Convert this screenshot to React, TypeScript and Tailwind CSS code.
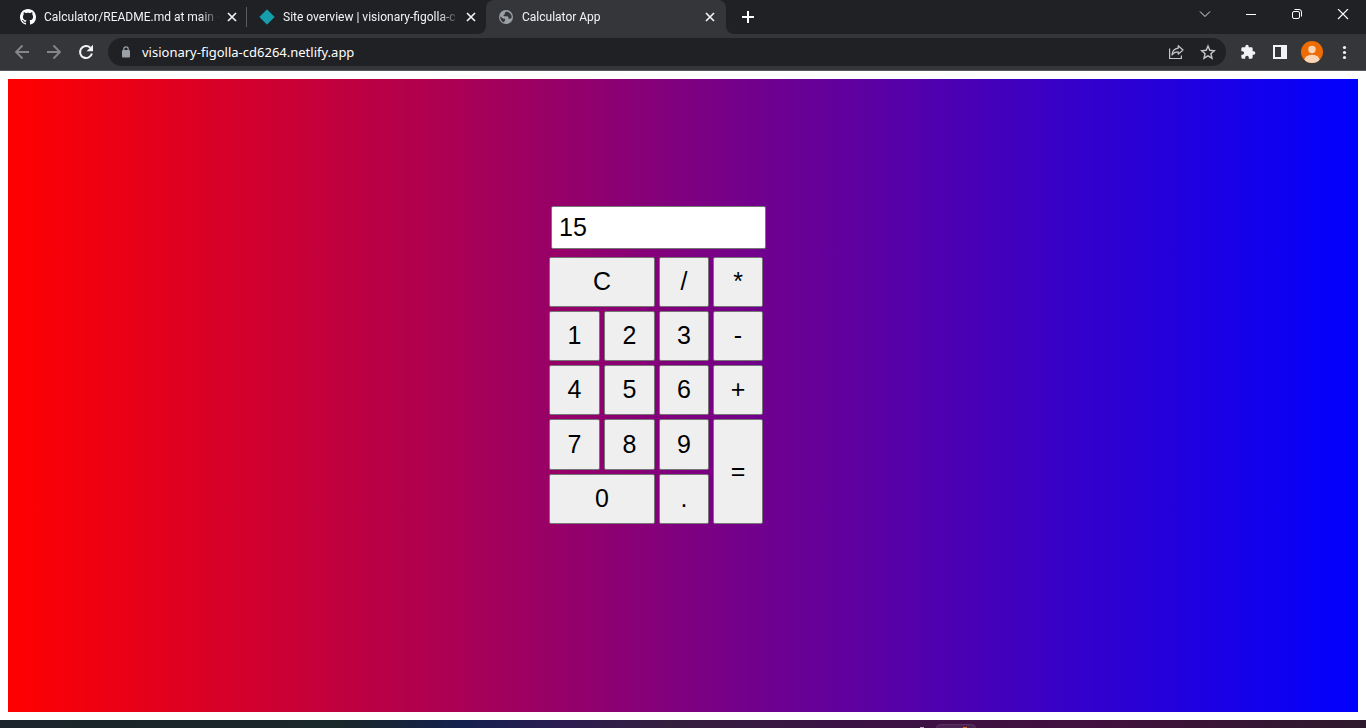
import { useState } from "react";
import type { ReactNode } from "react";

function GithubIcon() {
  return (
    <svg className="size-4 shrink-0" viewBox="0 0 16 16" fill="#fff" aria-hidden="true">
      <path d="M8 0C3.58 0 0 3.58 0 8c0 3.54 2.29 6.53 5.47 7.59.4.07.55-.17.55-.38 0-.19-.01-.82-.01-1.49-2.01.37-2.53-.49-2.69-.94-.09-.23-.48-.94-.82-1.13-.28-.15-.68-.52-.01-.53.63-.01 1.08.58 1.23.82.72 1.21 1.87.87 2.33.66.07-.52.28-.87.51-1.07-1.78-.2-3.64-.89-3.64-3.95 0-.87.31-1.59.82-2.15-.08-.2-.36-1.02.08-2.12 0 0 .67-.21 2.2.82.64-.18 1.32-.27 2-.27s1.36.09 2 .27c1.53-1.04 2.2-.82 2.2-.82.44 1.1.16 1.92.08 2.12.51.56.82 1.27.82 2.15 0 3.07-1.87 3.75-3.65 3.95.29.25.54.73.54 1.48 0 1.07-.01 1.93-.01 2.2 0 .21.15.46.55.38A8.01 8.01 0 0 0 16 8c0-4.42-3.58-8-8-8Z" />
    </svg>
  );
}

function NetlifyIcon() {
  return (
    <svg className="size-4 shrink-0" viewBox="0 0 16 16" aria-hidden="true">
      <path d="M8 .8 15.2 8 8 15.2.8 8Z" fill="#159fad" stroke="#159fad" strokeLinejoin="round" />
    </svg>
  );
}

function GlobeIcon() {
  return (
    <svg className="size-4 shrink-0" viewBox="0 0 16 16" aria-hidden="true">
      <circle cx="8" cy="8" r="7" fill="#9aa0a6" />
      <path
        d="M8.6 2.4 6.9 3.6v1.5L5.2 6.2l1.2 1.1h3.1l1 1.1v1.3h1.7l1.4-.9c.3-2.9-.9-5.2-5-6.4ZM2.3 7.3l2.9 2.4h1.9v1.6l-.9 1.1v1.2C3.500 12.800 2 10.400 2.300 7.300Z"
        fill="#35363a"
      />
    </svg>
  );
}

function CloseIcon() {
  return (
    <svg className="size-3" viewBox="0 0 12 12" stroke="#f1f3f4" strokeWidth="1.7" aria-hidden="true">
      <path d="m2 2 8 8M10 2l-8 8" />
    </svg>
  );
}

function TabFlare({ side }: { side: "left" | "right" }) {
  return (
    <svg
      className={side === "left" ? "absolute bottom-0 -left-2 size-2" : "absolute bottom-0 -right-2 size-2"}
      viewBox="0 0 8 8"
      fill="#35363a"
      aria-hidden="true"
    >
      <path d={side === "left" ? "M8 0v8H0a8 8 0 0 0 8-8Z" : "M0 0v8h8a8 8 0 0 1-8-8Z"} />
    </svg>
  );
}

function Tab({ icon, title, active = false }: { icon: ReactNode; title: string; active?: boolean }) {
  return (
    <div
      className={
        active
          ? "relative flex h-full w-60 min-w-0 items-center rounded-t-lg bg-[#35363a] pr-2 pl-3"
          : "relative flex h-full w-[239px] min-w-0 items-center pr-[7px] pl-3"
      }
    >
      {active && <TabFlare side="left" />}
      {icon}
      <a
        href="#calculator"
        className="mr-1 ml-2 min-w-0 flex-1 overflow-hidden mask-[linear-gradient(to_right,#000_calc(100%-20px),transparent)] font-[Roboto,sans-serif] text-xs leading-4 whitespace-nowrap text-[#f1f3f4]"
      >
        {title}
      </a>
      <button type="button" aria-label={"Close " + title} className="flex size-4 items-center justify-center">
        <CloseIcon />
      </button>
      {active && <TabFlare side="right" />}
    </div>
  );
}

function TabStrip() {
  return (
    <div className="flex h-[34px] items-center bg-[#202124] pl-2">
      <Tab icon={<GithubIcon />} title="Calculator/README.md at main ·" />
      <div className="-ml-px h-5 w-px bg-[#5a5c60]" />
      <Tab icon={<NetlifyIcon />} title="Site overview | visionary-figolla-c" />
      <Tab icon={<GlobeIcon />} title="Calculator App" active />
      <button type="button" aria-label="New tab" className="ml-3 flex size-5 items-center justify-center">
        <svg className="size-3" viewBox="0 0 12 12" stroke="#fff" strokeWidth="2" aria-hidden="true">
          <path d="M6 0v12M0 6h12" />
        </svg>
      </button>
      <div className="ml-auto flex h-7 items-center pb-1">
        <button type="button" aria-label="Search tabs" className="flex w-[46px] justify-center">
          <svg className="size-3" viewBox="0 0 12 12" fill="none" stroke="#e4e5e7" aria-hidden="true">
            <path d="m1 2.500 5 5 5-5" />
          </svg>
        </button>
        <button type="button" aria-label="Minimize" className="flex w-[46px] justify-center">
          <svg className="size-3" viewBox="0 0 12 12" stroke="#fff" aria-hidden="true">
            <path d="M1 5.500h10" />
          </svg>
        </button>
        <button type="button" aria-label="Restore" className="flex w-[46px] justify-center">
          <svg className="size-3" viewBox="0 0 12 12" fill="none" stroke="#fff" aria-hidden="true">
            <rect x="1.500" y="2.500" width="7" height="7" rx="1.500" />
            <path d="M3.500 .5H8A2.500 2.500 0 0 1 10.500 3v4.500" />
          </svg>
        </button>
        <button type="button" aria-label="Close window" className="flex w-[46px] justify-center">
          <svg className="size-3" viewBox="0 0 12 12" stroke="#fff" strokeWidth="1.100" aria-hidden="true">
            <path d="m1 0 10 10M11 0 1 10" />
          </svg>
        </button>
      </div>
    </div>
  );
}

function Toolbar() {
  return (
    <div className="flex h-[37px] items-center border-b border-[#5b5860] bg-[#35363a] px-3.5">
      <div className="flex gap-4">
        <button type="button" aria-label="Back">
          <svg className="size-4" viewBox="0 0 16 16" fill="none" stroke="#85868a" strokeWidth="1.800" aria-hidden="true">
            <path d="M15 8H2.500M8.500 1.500 2 8l6.500 6.500" />
          </svg>
        </button>
        <button type="button" aria-label="Forward">
          <svg className="size-4" viewBox="0 0 16 16" fill="none" stroke="#85868a" strokeWidth="1.800" aria-hidden="true">
            <path d="M1 8h12.500M7.500 1.500 14 8l-6.500 6.500" />
          </svg>
        </button>
        <button type="button" aria-label="Reload">
          <svg className="size-4" viewBox="0 0 16 16" fill="none" aria-hidden="true">
            <path d="M13.900 9.500A6 6 0 1 1 12.300 3.800" stroke="#f1f3f4" strokeWidth="2" />
            <path d="M15 .8v6.400H8.600Z" fill="#f1f3f4" />
          </svg>
        </button>
      </div>
      <div className="ml-3.5 flex h-7 min-w-0 flex-1 items-center rounded-full bg-[#202124] pr-2.5 pl-3">
        <svg className="h-3 w-3 shrink-0" viewBox="0 0 12 12" aria-hidden="true">
          <rect x="2" y="4" width="8" height="7.500" rx="1" fill="#9aa0a6" />
          <path d="M3.800 4.500V3a2.200 2.200 0 0 1 4.400 0v1.500" fill="none" stroke="#9aa0a6" strokeWidth="1.200" />
        </svg>
        <input
          type="text"
          aria-label="Address"
          defaultValue="visionary-figolla-cd6264.netlify.app"
          className="ml-2.5 min-w-0 flex-1 bg-transparent font-['Noto_Sans',sans-serif] text-[13px] leading-5 text-white outline-none"
        />
        <button type="button" aria-label="Share this page">
          <svg className="size-4" viewBox="0 0 16 16" fill="none" stroke="#c4c7ca" strokeWidth="1.200" aria-hidden="true">
            <path d="M1.600 4.500v10h11.800v-3" />
            <path d="M10.200 1.700 15 6l-4.800 4.200V7.800C7.500 7.800 5.500 8.600 4 11c.3-3.800 2.600-6.300 6.200-6.800Z" strokeLinejoin="round" />
          </svg>
        </button>
        <button type="button" aria-label="Bookmark this tab" className="ml-4">
          <svg className="size-4" viewBox="0 0 16 16" fill="none" stroke="#c4c7ca" strokeWidth="1.400" aria-hidden="true">
            <path d="m8 2 1.800 4.300 4.600.4-3.500 3 1.100 4.500L8 11.800l-4 2.400 1.100-4.500-3.500-3 4.600-.4Z" />
          </svg>
        </button>
      </div>
      <div className="ml-3.5 flex items-center">
        <button type="button" aria-label="Extensions">
          <svg className="size-4" viewBox="0 0 24 24" fill="#f1f3f4" aria-hidden="true">
            <path d="M20.500 11H19V7a2 2 0 0 0-2-2h-4V3.500a2.500 2.500 0 0 0-5 0V5H4a2 2 0 0 0-2 2v3.800h1.500a2.700 2.700 0 0 1 0 5.400H2V20a2 2 0 0 0 2 2h3.800v-1.500a2.700 2.700 0 0 1 5.400 0V22H17a2 2 0 0 0 2-2v-4h1.500a2.500 2.500 0 0 0 0-5Z" />
          </svg>
        </button>
        <button type="button" aria-label="Side panel" className="ml-4">
          <svg className="size-4" viewBox="0 0 16 16" aria-hidden="true">
            <path fillRule="evenodd" d="M1 1h14v14H1ZM3 3v10h6V3Z" fill="#f1f3f4" />
          </svg>
        </button>
        <button type="button" aria-label="Profile" className="ml-[13px]">
          <svg className="size-[22px]" viewBox="0 0 22 22" aria-hidden="true">
            <clipPath id="avatar">
              <circle cx="11" cy="11" r="11" />
            </clipPath>
            <g clipPath="url(#avatar)">
              <rect width="22" height="22" fill="#ee6c02" />
              <circle cx="11" cy="8.500" r="3.700" fill="#f9d5b8" />
              <ellipse cx="11" cy="18.500" rx="7.500" ry="4.700" fill="#f9d5b8" />
            </g>
          </svg>
        </button>
        <button type="button" aria-label="Menu" className="ml-[13px]">
          <svg className="size-4" viewBox="0 0 16 16" fill="#f1f3f4" aria-hidden="true">
            <circle cx="8.500" cy="3.500" r="1.600" />
            <circle cx="8.500" cy="8.500" r="1.600" />
            <circle cx="8.500" cy="13.500" r="1.600" />
          </svg>
        </button>
      </div>
    </div>
  );
}

type CalcKey = { label: string; shape?: "wide" | "tall" };

const KEYS: CalcKey[] = [
  { label: "C", shape: "wide" },
  { label: "/" },
  { label: "*" },
  { label: "1" },
  { label: "2" },
  { label: "3" },
  { label: "-" },
  { label: "4" },
  { label: "5" },
  { label: "6" },
  { label: "+" },
  { label: "7" },
  { label: "8" },
  { label: "9" },
  { label: "=", shape: "tall" },
  { label: "0", shape: "wide" },
  { label: "." },
];

function apply(a: number, op: string, b: number) {
  if (op === "+") return a + b;
  if (op === "-") return a - b;
  if (op === "*") return a * b;
  return a / b;
}

function evaluate(expression: string) {
  const parts = expression.match(/\d*\.?\d+|[-+*/]/g) ?? [];
  const sums: string[] = [...parts];
  for (const group of ["*/", "+-"]) {
    let i = 1;
    while (i < sums.length - 1) {
      if (group.includes(sums[i])) {
        sums.splice(i - 1, 3, String(apply(Number(sums[i - 1]), sums[i], Number(sums[i + 1]))));
      } else {
        i += 1;
      }
    }
  }
  return sums[0] ?? "";
}

function Calculator() {
  const [value, setValue] = useState("15");

  function press(label: string) {
    if (label === "C") setValue("");
    else if (label === "=") setValue(evaluate(value));
    else setValue(value + label);
  }

  return (
    <div id="calculator" className="flex flex-col gap-2">
      <input
        type="text"
        aria-label="Result"
        value={value}
        onChange={(event) => setValue(event.target.value)}
        className="ml-0.5 h-[43px] w-[215px] rounded-xs border border-[#767676] bg-white px-[7px] text-[25px] leading-8 text-black outline-none"
      />
      <div className="grid grid-cols-[51px_51px_50px_50px] grid-rows-[50px_50px_50px_51px_50px] gap-1">
        {KEYS.map(({ label, shape }) => (
          <button
            key={label}
            type="button"
            onClick={() => press(label)}
            className={
              shape === "wide"
                ? "col-span-2 rounded-xs border border-[#767676] bg-[#efefef] pb-0.5 text-[25px] leading-7 text-black"
                : shape === "tall"
                  ? "row-span-2 rounded-xs border border-[#767676] bg-[#efefef] pb-0.5 text-[25px] leading-7 text-black"
                  : "rounded-xs border border-[#767676] bg-[#efefef] pb-0.5 text-[25px] leading-7 text-black"
            }
          >
            {label}
          </button>
        ))}
      </div>
    </div>
  );
}

export default function App() {
  return (
    <div className="flex min-h-screen flex-col bg-white">
      <header>
        <TabStrip />
        <Toolbar />
      </header>
      <main className="flex flex-1 flex-col p-2 font-['Liberation_Sans',Arial,sans-serif]">
        <div className="flex flex-1 items-start justify-center bg-[linear-gradient(to_right,#f00,#00f)] pt-[127px] pr-[51px]">
          <Calculator />
        </div>
      </main>
      <footer className="flex h-2 items-end justify-center overflow-hidden bg-[linear-gradient(to_right,#1b252b,#1a272b_25%,#14214e_34%,#2b1c50_41%,#35203f_49%,#3b1245_63%,#42113f_80%,#2d1a2c)] pl-[528px]">
        <svg className="h-2 w-[60px]" viewBox="0 0 60 8" aria-hidden="true">
          <rect x="3" y="7" width="4" height="1" fill="#b5a8b8" />
          <rect x="19.500" y="4.500" width="39" height="12" rx="4" fill="#4a2350" stroke="#5a3060" />
          <rect x="46" y="7" width="4" height="1" fill="#d86a1c" />
        </svg>
      </footer>
    </div>
  );
}
